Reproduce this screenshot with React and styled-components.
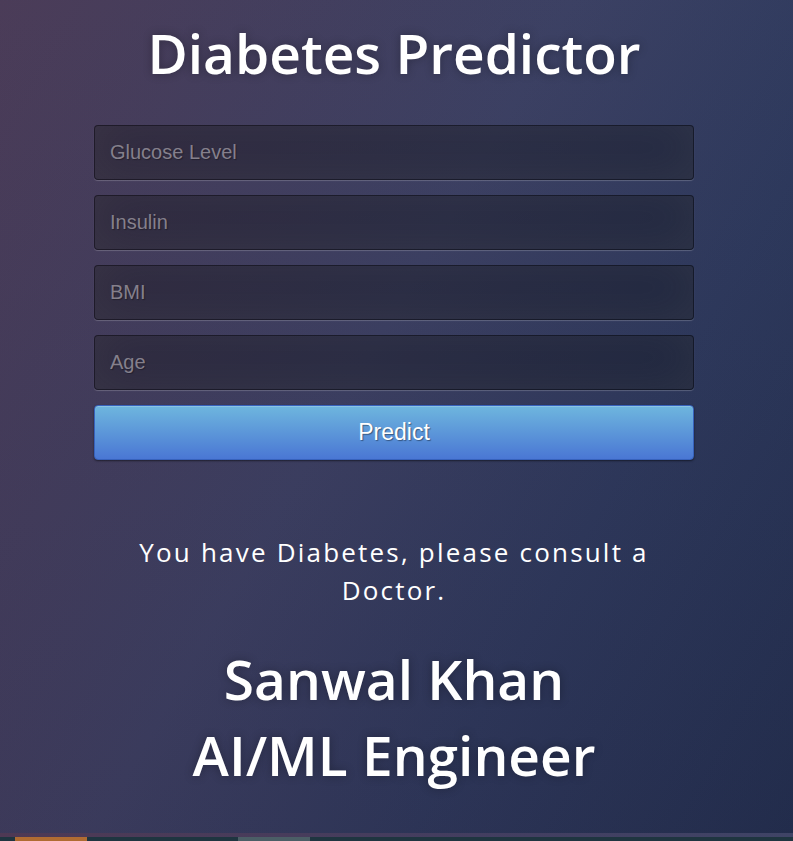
import React from 'react';
import styled, { createGlobalStyle } from 'styled-components';

const GlobalStyle = createGlobalStyle`
  html, body {
    margin: 0;
    padding: 0;
    height: 100%;
  }
  body {
    background: #1f3540;
    font-family: "Open Sans", "Liberation Sans", sans-serif;
  }
`;

const Page = styled.div`
  height: 833px;
  box-sizing: border-box;
  padding: 15px 5px 0 0;
  background:
    linear-gradient(to bottom, rgba(57, 173, 219, 0.06) 0%, rgba(42, 60, 87, 0.12) 100%),
    linear-gradient(120deg, #4c3550 0%, #3c3a5c 45%, #2d3356 70%, #212a4a 100%);
  display: flex;
  flex-direction: column;
  align-items: center;
`;

const Title = styled.h1`
  margin: 0;
  color: #fff;
  font-size: 55px;
  font-weight: 600;
  line-height: 76px;
  text-shadow: 0 0 10px rgba(0, 0, 0, 0.3);
`;

const Form = styled.form`
  width: 600px;
  margin-top: 34px;
  display: flex;
  flex-direction: column;
  gap: 15px;
`;

const Field = styled.input`
  box-sizing: border-box;
  width: 100%;
  height: 55px;
  padding: 0 15px;
  font-family: "Liberation Sans", Arial, sans-serif;
  font-size: 20px;
  color: #ccc;
  background: rgba(0, 0, 0, 0.3);
  border: 1px solid rgba(0, 0, 0, 0.35);
  border-radius: 4px;
  outline: none;
  text-shadow: 1px 1px 1px rgba(0, 0, 0, 0.3);
  box-shadow: inset 0 -5px 45px rgba(100, 100, 100, 0.2), 0 1px 1px rgba(255, 255, 255, 0.2);

  &::placeholder {
    color: #85808c;
  }
`;

const Button = styled.button`
  height: 55px;
  width: 100%;
  font-family: "Liberation Sans", Arial, sans-serif;
  font-size: 23px;
  color: #fff;
  background: linear-gradient(to bottom, #6eb6de, #4a77d4);
  border: 1px solid #3762bc;
  border-radius: 4px;
  text-shadow: 1px 1px 1px rgba(0, 0, 0, 0.4);
  box-shadow: inset 0 1px 0 rgba(255, 255, 255, 0.2), 0 1px 2px rgba(0, 0, 0, 0.5);
  cursor: pointer;
`;

const Result = styled.p`
  width: 570px;
  margin: 73px 0 0;
  text-align: center;
  color: #fff;
  font-size: 26px;
  line-height: 38px;
  letter-spacing: 2.2px;
`;

const Author = styled.h2`
  margin: 32px 0 0;
  text-align: center;
  color: #fff;
  font-size: 55px;
  font-weight: 600;
  line-height: 76px;
  text-shadow: 0 0 10px rgba(0, 0, 0, 0.3);
`;

const Strip = styled.div`
  height: 4px;
  background: linear-gradient(to right, #4e3954, #433e60 60%, #3f4466);
`;

const Tabs = styled.div`
  height: 4px;
  display: flex;
  background: #1f3540;
`;

const Tab = styled.span`
  width: 72px;
  margin-left: ${p => p.offset}px;
  background: ${p => p.color};
`;

export default function App() {
  return (
    <>
      <GlobalStyle />
      <Page>
        <Title>Diabetes Predictor</Title>
        <Form onSubmit={e => e.preventDefault()}>
          <Field placeholder="Glucose Level" />
          <Field placeholder="Insulin" />
          <Field placeholder="BMI" />
          <Field placeholder="Age" />
          <Button type="submit">Predict</Button>
        </Form>
        <Result>You have Diabetes, please consult a Doctor.</Result>
        <Author>
          Sanwal Khan<br />AI/ML Engineer
        </Author>
      </Page>
      <Strip />
      <Tabs>
        <Tab offset={15} color="#b06c32" />
        <Tab offset={151} color="#4b5e66" />
      </Tabs>
    </>
  );
}
